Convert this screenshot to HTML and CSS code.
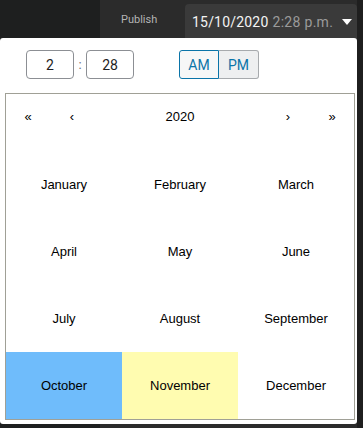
FILE: index.html
```html
<!DOCTYPE html>
<html>
<head>
<meta charset="utf-8">
<link rel="stylesheet" href="styles.css">
</head>
<body>
<div class="page">
  <div class="topbar">
    <div class="sidebar"></div>
    <div class="main">
      <span class="label">Publish</span>
      <div class="pubbtn">
        <span class="date">15/10/2020</span>
        <span class="time">2:28 p.m.</span>
        <svg class="caret" width="10" height="6" viewBox="0 0 10 6"><path d="M0 0 L10 0 L5 6 Z" fill="#ffffff"/></svg>
      </div>
    </div>
    <div class="strip"></div>
  </div>

  <div class="popover">
    <div class="timerow">
      <div class="field">2</div>
      <span class="colon">:</span>
      <div class="field">28</div>
      <div class="ampm">
        <span class="am">AM</span>
        <span class="pm">PM</span>
      </div>
    </div>
    <div class="calendar">
      <div class="nav">
        <span class="navbtn">«</span>
        <span class="navbtn">‹</span>
        <span class="navlabel">2020</span>
        <span class="navbtn">›</span>
        <span class="navbtn">»</span>
      </div>
      <div class="months">
        <span class="tile">January</span>
        <span class="tile">February</span>
        <span class="tile">March</span>
        <span class="tile">April</span>
        <span class="tile">May</span>
        <span class="tile">June</span>
        <span class="tile">July</span>
        <span class="tile">August</span>
        <span class="tile">September</span>
        <span class="tile active">October</span>
        <span class="tile now">November</span>
        <span class="tile">December</span>
      </div>
    </div>
  </div>
</div>
</body>
</html>
```

FILE: styles.css
```css
html, body {
  margin: 0;
  padding: 0;
}
body {
  background: #2b2b2b;
  width: 363px;
  height: 428px;
  overflow: hidden;
}
.page {
  position: relative;
  width: 363px;
  height: 428px;
  display: flex;
  flex-direction: column;
  background: #2b2b2b;
}
.topbar {
  display: flex;
  height: 428px;
}
.sidebar {
  width: 100px;
  background: #1e1f1f;
}
.main {
  flex: 1;
  display: flex;
  align-items: flex-start;
  background: #2b2b2b;
  font-family: Roboto, "Noto Sans", sans-serif;
}
.label {
  margin-left: 21px;
  margin-top: 13px;
  font-size: 11px;
  line-height: 14px;
  color: #b4b4b4;
  width: 64px;
}
.pubbtn {
  margin-top: 4px;
  height: 40px;
  width: 172px;
  box-sizing: border-box;
  background: #3a3a3a;
  border-radius: 4px;
  display: flex;
  align-items: flex-start;
  padding: 9px 0 0 7px;
  font-size: 14px;
  line-height: 18px;
}
.date {
  color: #f4f4f4;
  font-weight: 400;
  letter-spacing: 0.2px;
}
.time {
  color: #9a9a9a;
  margin-left: 4px;
  letter-spacing: 0.3px;
}
.caret {
  margin-left: 9px;
  margin-top: 6px;
}
.strip {
  width: 6px;
  background: #1f1f1f;
}
.popover {
  position: absolute;
  top: 38px;
  left: 0;
  width: 357px;
  height: 386px;
  box-sizing: border-box;
  background: #ffffff;
  border-radius: 3px;
  padding: 12px 2px 3px 5px;
}
.timerow {
  display: flex;
  align-items: center;
  height: 29px;
  margin-left: 21px;
  margin-bottom: 14px;
  font-family: Roboto, "Noto Sans", sans-serif;
  font-size: 14px;
}
.field {
  width: 48px;
  height: 29px;
  box-sizing: border-box;
  border: 1px solid #8c8f94;
  border-radius: 4px;
  display: flex;
  align-items: center;
  justify-content: center;
  color: #1e1e1e;
}
.colon {
  width: 12px;
  text-align: center;
  color: #6c7078;
  font-size: 13px;
}
.ampm {
  display: flex;
  margin-left: 45px;
  height: 29px;
}
.am, .pm {
  width: 40px;
  height: 29px;
  box-sizing: border-box;
  display: flex;
  align-items: center;
  justify-content: center;
  color: #0a74a8;
}
.am {
  border: 1px solid #0a74a8;
  border-radius: 3px 0 0 3px;
  background: #f6f7f7;
}
.pm {
  border: 1px solid #a7aaad;
  border-left: none;
  border-radius: 0 3px 3px 0;
  background: #eeeff0;
}
.calendar {
  width: 350px;
  box-sizing: border-box;
  border: 1px solid #a0a096;
  font-family: "Liberation Sans", Arial, sans-serif;
  font-size: 13px;
  color: #000000;
}
.nav {
  display: flex;
  height: 44px;
  margin-bottom: 13px;
  align-items: center;
}
.navbtn {
  width: 44px;
  text-align: center;
  font-size: 13px;
}
.navlabel {
  flex: 1;
  text-align: center;
}
.months {
  display: grid;
  grid-template-columns: repeat(3, 1fr);
}
.tile {
  height: 67px;
  display: flex;
  align-items: center;
  justify-content: center;
  line-height: 16px;
}
.tile.active {
  background: #6fbcfb;
}
.tile.now {
  background: #fffcb0;
}
```
